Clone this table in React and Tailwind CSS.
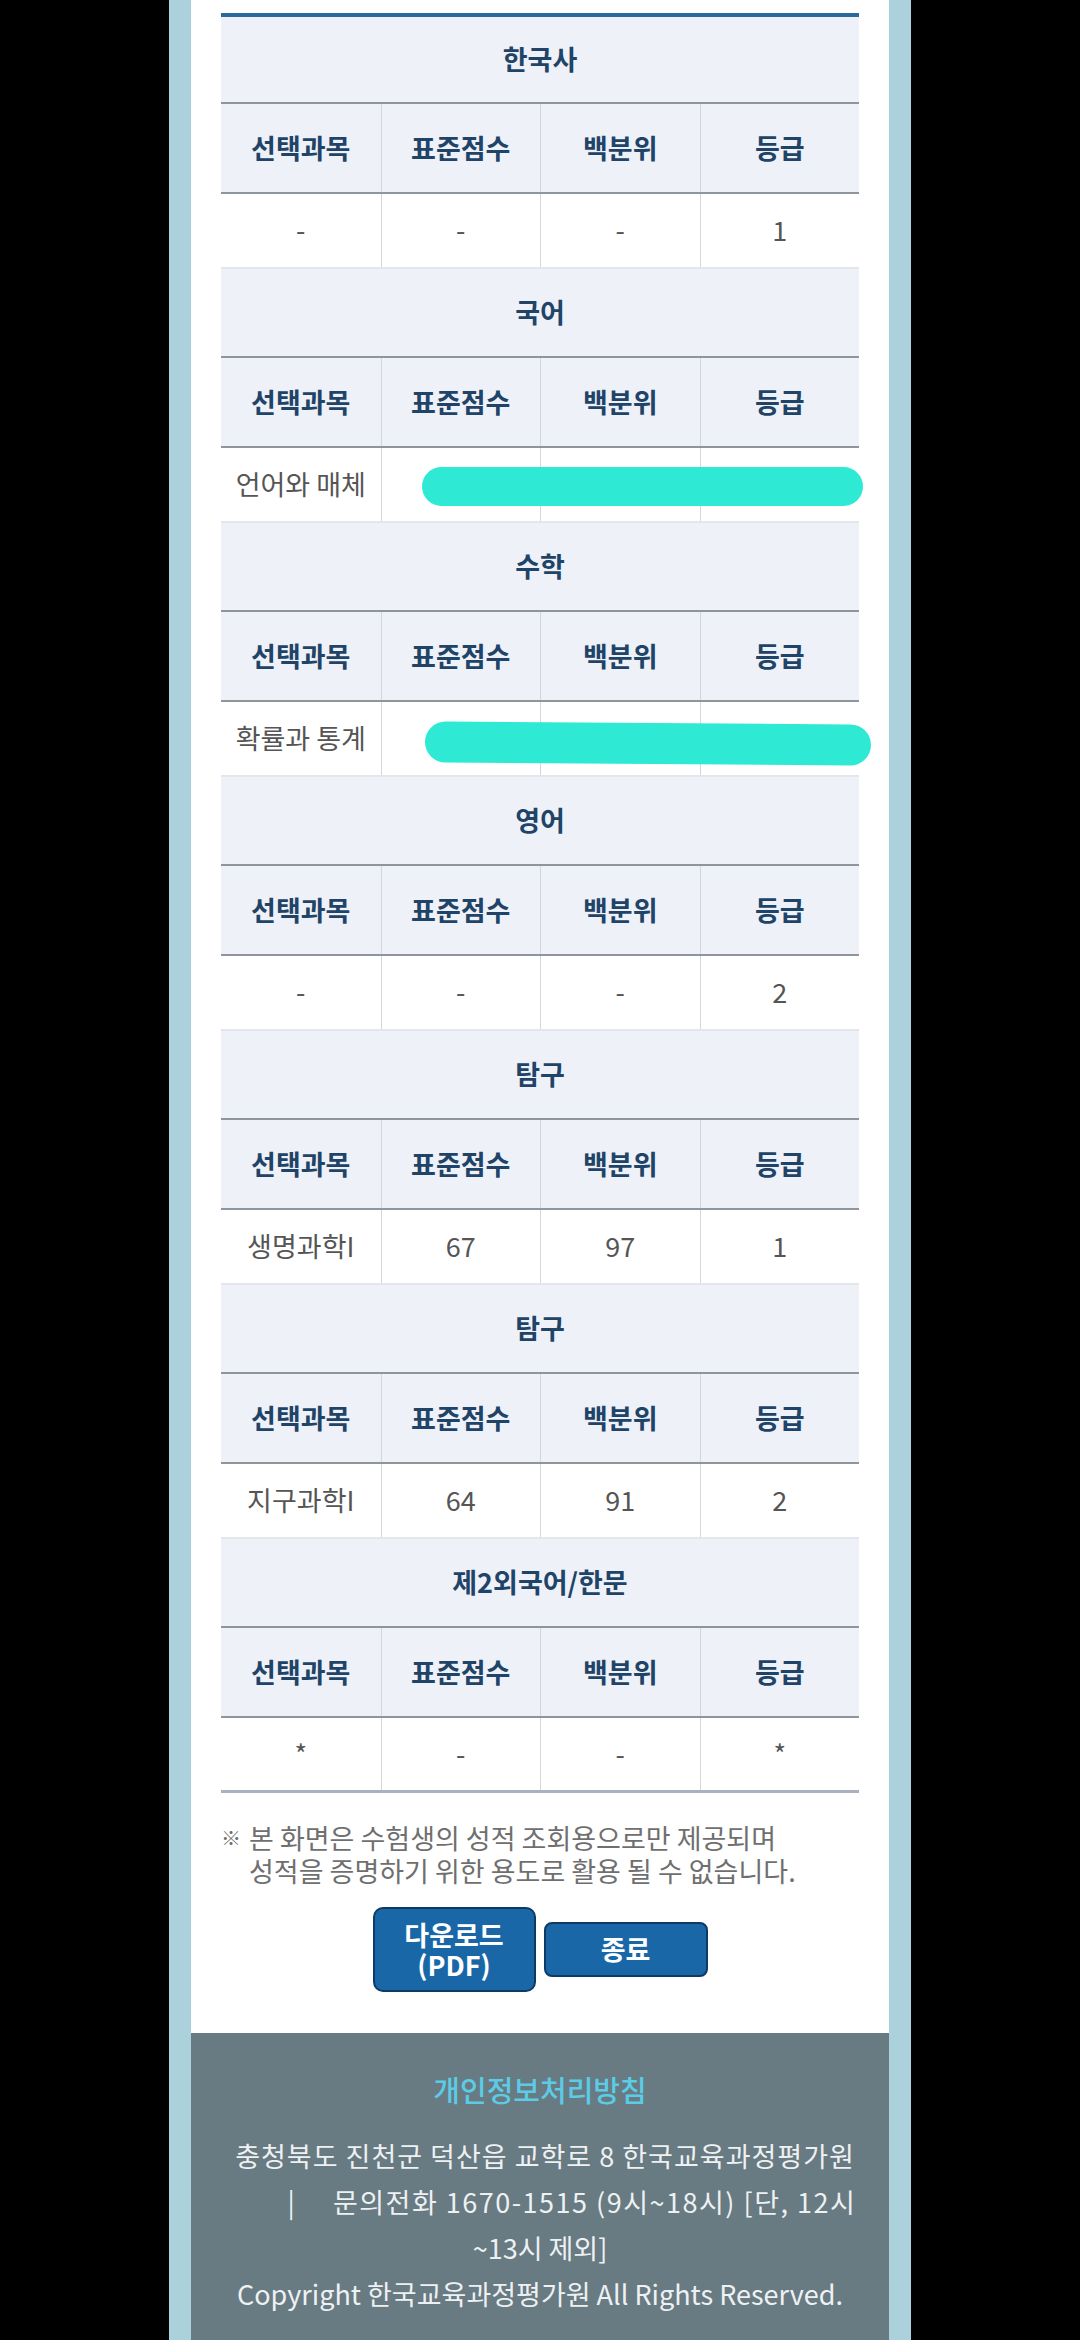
import React from 'react';

const columns = ['선택과목', '표준점수', '백분위', '등급'];

const subjects = [
  { name: '한국사', values: ['-', '-', '-', '1'] },
  { name: '국어', values: ['언어와 매체', '', '', ''], blob: 'korean' },
  { name: '수학', values: ['확률과 통계', '', '', ''], blob: 'math' },
  { name: '영어', values: ['-', '-', '-', '2'] },
  { name: '탐구', values: ['생명과학I', '67', '97', '1'] },
  { name: '탐구', values: ['지구과학I', '64', '91', '2'] },
  { name: '제2외국어/한문', values: ['*', '-', '-', '*'] },
];

const SubjectBlock = ({ subject, first, last }) => (
  <div>
    {/* Subject title */}
    <div
      className={`flex items-center justify-center bg-[#eef2f8] border-b-2 border-[#8f959c] text-[27px] font-bold text-[#1f4468] ${
        first ? 'h-[87px]' : 'h-[89px]'
      }`}
    >
      {subject.name}
    </div>

    {/* Column header */}
    <div className="grid grid-cols-4 h-[90px] bg-[#eef2f8] border-b-2 border-[#8f959c]">
      {columns.map((col, i) => (
        <div
          key={col}
          className={`flex items-center justify-center text-[27px] font-bold text-[#1f4468] ${
            i > 0 ? 'border-l border-[#d3d7dc]' : ''
          }`}
        >
          {col}
        </div>
      ))}
    </div>

    {/* Values */}
    <div
      className={`relative grid grid-cols-4 h-[75px] bg-white ${
        last ? 'border-b-[3px] border-[#a9b1c0]' : 'border-b-2 border-[#e3e6ea]'
      }`}
    >
      {subject.values.map((v, i) => (
        <div
          key={i}
          className={`flex items-center justify-center text-[27px] text-[#555555] ${
            i > 0 ? 'border-l border-[#d3d7dc]' : ''
          }`}
        >
          {v}
        </div>
      ))}
      {subject.blob === 'korean' && (
        <div className="absolute left-[201px] top-[19px] w-[441px] h-[39px] rounded-full bg-[#2eead4]" />
      )}
      {subject.blob === 'math' && (
        <div className="absolute left-[204px] top-[21px] w-[446px] h-[41px] rounded-full bg-[#2eead4] rotate-[0.4deg]" />
      )}
    </div>
  </div>
);

export default function App() {
  return (
    <div className="min-h-screen bg-black flex justify-center font-['Noto_Sans_CJK_KR','Noto_Sans',sans-serif]">
      <div className="w-[742px] bg-[#aad1dc] px-[22px]">
        <div className="bg-white pt-[13px] pb-[41px]">
          {/* Score table */}
          <div className="mx-[30px] border-t-4 border-[#2a6a9a]">
            {subjects.map((s, i) => (
              <SubjectBlock
                key={i}
                subject={s}
                first={i === 0}
                last={i === subjects.length - 1}
              />
            ))}
          </div>

          {/* Notice */}
          <div className="mx-[30px] mt-[28px] flex text-[27px] leading-[33px] text-[#6f6f6f] whitespace-nowrap">
            <span className="w-[28px] shrink-0 text-[20px]">※</span>
            <div>
              본 화면은 수험생의 성적 조회용으로만 제공되며
              <br />
              성적을 증명하기 위한 용도로 활용 될 수 없습니다.
            </div>
          </div>

          {/* Buttons */}
          <div className="mt-[20px] flex items-center justify-center gap-[8px]">
            <button className="w-[163px] h-[85px] rounded-[10px] border-2 border-[#0e3b64] bg-[#1a67a8] text-white text-[27px] font-bold leading-[30px]">
              다운로드
              <br />
              (PDF)
            </button>
            <button className="w-[164px] h-[55px] rounded-[8px] border-2 border-[#0e3b64] bg-[#1a67a8] text-white text-[27px] font-bold">
              종료
            </button>
          </div>
        </div>

        {/* Footer */}
        <div className="bg-[#687a82] pt-[36px] pb-[40px] text-center">
          <div className="text-[29px] leading-[40px] font-medium text-[#5ccbe6]">개인정보처리방침</div>
          <div className="mt-[24px] text-[27px] leading-[46px] text-[#eef1f2]">
            <div className="pl-[10px] tracking-[1px] whitespace-nowrap">충청북도 진천군 덕산읍 교학로 8 한국교육과정평가원</div>
            <div className="pl-[64px] whitespace-nowrap">
              <span>|</span>
              <span className="ml-[38px] tracking-[1.5px]">문의전화 1670-1515 (9시~18시) [단, 12시</span>
            </div>
            <div>~13시 제외]</div>
            <div className="whitespace-nowrap">Copyright 한국교육과정평가원 All Rights Reserved.</div>
          </div>
        </div>
      </div>
    </div>
  );
}
